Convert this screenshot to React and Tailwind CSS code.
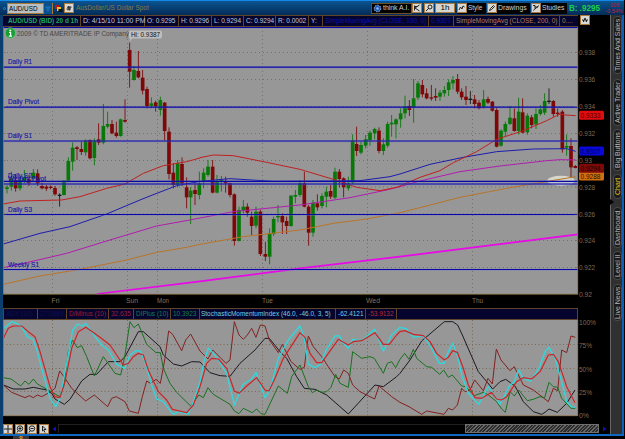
import React from "react";

// Chart data is kept on a 3x grid: trace(dx, dy, points) shifts one stretch of a study.
const trace = (dx, dy, pts) =>
  pts
    .split(" ")
    .map((p) => {
      const [x, y] = p.split(",").map(Number);
      return `${x + dx},${y + dy}`;
    })
    .join(" ");
const join = (...parts) => parts.map((p) => trace(...p)).join(" ");

const SMA_RED = join(
  [0, 300, "10,312 60,303 185,300 240,290 320,265 375,252 430,220 490,197 560,185 600,174"],
  [600, 300, "0,173 40,165 100,167 200,187 300,208 400,238 470,262 540,272 590,262"],
  [1200, 300, "0,258 60,232 120,212 160,188 230,155 290,118 370,92 440,62 480,42 495,45 527,47"]
);
const SMA_BLUE = join(
  [0, 600, "10,132 120,100 210,80 320,42 420,0"],
  [0, 300, "450,288 530,257"],
  [600, 300, "0,244 90,236 220,244 400,243 480,242 570,230"],
  [1200, 300, "0,222 90,193 190,172 290,155 400,147 500,146 527,154"]
);
const SMA_PURPLE = join(
  [0, 600, "10,203 80,188 200,160 330,120 470,78 570,60"],
  [600, 600, "0,54 100,35 300,15"],
  [600, 300, "450,293 560,270"],
  [1200, 300, "0,260 60,243 180,215 300,198 440,182 480,179 527,180"]
);
const SMA_ORANGE = join(
  [0, 600, "10,253 120,228 240,208 380,180 470,157 560,142"],
  [600, 600, "0,133 130,110 300,90 400,70 500,57"],
  [1200, 600, "0,38"],
  [1200, 300, "40,328 180,292 320,265 450,243 527,230"]
);
const TREND = "290,882 600,844 900,805 1200,770 1734,703";

const SMI = join(
  [0, 915, "12,70 35,50 50,55 65,65 82,95 100,105 112,140 125,190 150,280 167,305 182,275 195,200 205,150 218,75 233,57 247,63 257,55 280,88 305,120 325,135 350,178 375,190 390,150 407,137 420,138 435,170 455,240 470,282 490,290 505,310 520,328 535,320 565,328 580,290"],
  [600, 915, "0,230 12,170 25,130 45,150 80,205 103,300 130,237 155,222 168,203 195,278 210,255 235,160 265,105 300,63 312,95 325,178 345,188 362,178 380,132 405,93 418,92 430,115 445,130 458,103 485,107 524,73 550,138 575,90"],
  [1200, 915, "0,67 20,72 40,97 70,92 95,130 118,175 132,175 145,140 158,115 172,150 185,210 205,265 236,298 265,245 285,275 300,298 330,240 342,232 356,195 370,220 393,228 418,188 435,140 447,127 465,160 485,230 500,290 515,305 525,307"]
);
const SIGNAL = join(
  [0, 915, "10,100 25,70 40,63 65,63 85,80 105,95 120,140 150,245 165,275 180,278 195,230 215,130 235,80 258,67 300,97 330,120 370,180 385,175 400,155 415,145 430,150 445,195 475,260 500,285 517,313 560,323 580,300"],
  [600, 915, "0,245 20,175 35,160 55,162 80,190 103,258 117,265 140,243 170,218 195,255 207,258 225,220 250,160 300,83 315,97 330,145 350,173 365,173 385,145 415,103 445,120 460,110 485,107 525,83 550,118 568,118 590,90"],
  [1200, 915, "0,80 15,77 40,88 70,92 90,110 110,145 133,165 145,157 158,137 172,142 190,190 205,240 225,278 245,280 275,262 290,282 305,285 320,275 350,230 370,218 395,222 420,200 445,150 460,148 475,170 500,245 525,293"]
);
const ADX = join(
  [0, 915, "10,240 40,252 75,252 100,247 140,255 155,265 165,282 193,298 210,283 245,228 270,208 290,208 325,170 360,170 375,155 415,80 430,80 480,125 490,150 520,177 545,183 575,170"],
  [600, 915, "0,171 30,203 60,212 90,214 120,175 165,135 195,100 208,100 240,140 260,160 290,215 313,250 345,253 380,270 445,327 525,240 550,245 590,215"],
  [1200, 915, "0,205 30,165 65,108 133,50 158,50 173,60 187,90 235,200 262,232 278,252 300,230 317,223 345,243 370,290 400,320 425,328 435,322 447,312 472,322 500,295 525,255"]
);
const DI_MINUS = join(
  [0, 915, "10,240 35,262 75,278 88,272 100,278 112,270 125,275 150,262 165,250 179,198 192,215 215,250 257,288 283,270 323,305 335,280 349,275 375,290 388,318 415,325 427,275 440,228 452,235 468,223 481,235 495,160 506,78 518,88 545,137 557,105 572,87 590,120"],
  [600, 915, "0,138 24,162 38,135 78,175 90,165 103,50 117,90 130,103 142,90 155,70 168,97 181,60 195,63 208,105 235,143 247,118 273,170 300,193 313,187 325,93 340,125 365,155 385,185 405,215 418,222 431,195 445,205 458,240 480,260 524,282 537,243 575,275"],
  [1200, 915, "0,292 27,305 65,328 80,318 132,328 145,310 158,315 172,300 185,250 195,260 210,255 224,225 250,257 264,220 277,237 289,132 303,165 330,197 343,185 370,240 400,255 445,290 460,250 473,257 485,135 500,143 513,93 526,97"]
);
const DI_PLUS = join(
  [0, 915, "10,218 33,222 62,243 75,228 87,238 100,222 112,237 150,258 179,275 192,240 205,140 217,105 232,128 245,122 260,155 283,213 310,155 345,205 362,210 375,150 390,50 402,68 415,57 440,118 468,143 481,143 490,190 510,235 530,262 572,303 597,270"],
  [600, 915, "10,278 24,248 40,268 90,298 103,318 117,326 130,310 157,323 170,312 183,326 195,328 235,243 262,265 275,215 300,180 325,245 337,263 350,255 365,262 380,260 393,247 407,208 420,235 445,247 458,140 485,160 510,155 523,160 550,205 562,175 575,170 587,188"],
  [1200, 915, "0,163 14,145 27,163 40,133 50,160 80,185 95,187 119,208 131,195 145,217 157,210 185,243 197,245 223,272 250,262 265,270 290,290 305,312 316,322 330,260 343,273 356,255 382,287 400,283 420,275 434,278 447,232 460,245 473,247 485,280 513,310 526,310"]
);

// [x, body top, body bottom, high, low, colour] on the same 3x grid
const CANDLES = [
  [21, 562, 567, 555, 580, "g"], [34, 535, 560, 515, 572, "g"], [47, 540, 565, 522, 575, "r"],
  [60, 540, 565, 528, 572, "g"], [73, 532, 543, 510, 550, "g"], [87, 538, 548, 525, 558, "r"],
  [100, 518, 535, 507, 545, "g"], [113, 520, 550, 508, 558, "r"], [126, 558, 565, 548, 568, "r"],
  [139, 560, 566, 555, 573, "r"], [152, 560, 564, 556, 568, "r"], [165, 564, 583, 558, 587, "r"],
  [179, 584, 588, 580, 620, "k"], [192, 542, 585, 540, 586, "g"], [205, 483, 542, 472, 545, "g"],
  [218, 443, 485, 427, 512, "g"], [231, 442, 447, 438, 480, "r"], [244, 447, 456, 425, 465, "r"],
  [257, 422, 457, 418, 467, "g"], [270, 420, 475, 418, 478, "r"], [283, 422, 474, 415, 496, "g"],
  [296, 418, 428, 370, 435, "r"], [310, 378, 428, 312, 433, "g"], [323, 372, 380, 335, 385, "g"],
  [336, 372, 400, 360, 403, "r"], [349, 398, 408, 365, 413, "r"], [362, 358, 408, 356, 410, "g"],
  [375, 360, 365, 298, 368, "r"], [389, 150, 215, 128, 263, "r"], [402, 210, 240, 198, 242, "g"],
  [415, 213, 232, 153, 235, "r"], [428, 233, 272, 210, 283, "r"], [441, 267, 318, 260, 325, "r"],
  [454, 310, 318, 292, 325, "g"], [467, 307, 319, 302, 335, "r"], [481, 300, 330, 290, 347, "g"],
  [494, 308, 393, 306, 422, "r"], [507, 395, 522, 382, 538, "r"], [520, 518, 555, 490, 565, "r"],
  [533, 490, 555, 480, 562, "g"], [546, 492, 550, 472, 558, "r"], [560, 562, 592, 532, 625, "r"],
  [572, 572, 592, 562, 672, "g"], [585, 570, 582, 545, 615, "r"], [598, 550, 585, 515, 598, "g"],
  [611, 518, 543, 505, 565, "g"], [624, 500, 525, 480, 530, "g"], [638, 500, 578, 480, 580, "r"],
  [651, 543, 578, 525, 580, "g"], [664, 540, 545, 528, 575, "g"], [677, 543, 550, 530, 578, "r"],
  [690, 550, 585, 548, 592, "r"], [703, 583, 723, 580, 737, "r"], [717, 630, 723, 620, 724, "g"],
  [730, 620, 632, 600, 640, "g"], [742, 620, 638, 610, 650, "r"], [755, 650, 678, 635, 705, "r"],
  [768, 635, 677, 620, 685, "g"], [781, 635, 762, 628, 768, "r"], [796, 762, 770, 725, 783, "r"],
  [809, 700, 770, 685, 793, "g"], [821, 657, 702, 650, 708, "g"], [834, 648, 652, 615, 667, "g"],
  [847, 648, 667, 640, 702, "r"], [860, 663, 678, 650, 702, "r"], [873, 587, 678, 585, 680, "g"],
  [886, 585, 590, 570, 610, "g"], [900, 550, 585, 540, 590, "g"], [913, 550, 620, 515, 622, "r"],
  [926, 620, 698, 615, 737, "r"], [939, 608, 698, 600, 710, "g"], [952, 610, 622, 583, 632, "r"],
  [966, 588, 618, 580, 625, "g"], [979, 575, 590, 560, 622, "g"], [992, 573, 590, 555, 597, "r"],
  [1005, 515, 593, 503, 597, "g"], [1018, 515, 537, 507, 562, "r"], [1031, 535, 562, 532, 592, "r"],
  [1045, 550, 565, 530, 572, "g"], [1058, 422, 547, 403, 552, "g"], [1070, 432, 453, 380, 468, "r"],
  [1083, 435, 458, 425, 463, "g"], [1097, 418, 437, 405, 445, "g"], [1110, 398, 420, 392, 437, "g"],
  [1124, 387, 400, 383, 418, "g"], [1137, 392, 453, 382, 460, "r"], [1150, 433, 453, 415, 465, "g"],
  [1163, 372, 437, 365, 443, "g"], [1175, 368, 373, 345, 410, "g"], [1188, 358, 373, 355, 415, "g"],
  [1202, 340, 358, 325, 383, "g"], [1215, 320, 340, 287, 355, "g"], [1228, 318, 330, 300, 348, "r"],
  [1241, 295, 322, 237, 368, "g"], [1254, 250, 293, 243, 300, "g"], [1267, 255, 283, 240, 292, "r"],
  [1280, 280, 295, 265, 298, "r"], [1294, 292, 296, 255, 302, "r"], [1307, 288, 293, 265, 303, "r"],
  [1320, 278, 290, 270, 302, "g"], [1333, 270, 280, 258, 290, "g"], [1346, 247, 270, 238, 288, "g"],
  [1359, 240, 250, 228, 268, "g"], [1373, 237, 275, 222, 282, "r"], [1385, 275, 292, 265, 300, "r"],
  [1398, 290, 300, 258, 315, "r"], [1411, 296, 300, 273, 312, "k"], [1424, 298, 312, 285, 325, "r"],
  [1437, 308, 325, 300, 328, "r"], [1451, 298, 322, 270, 326, "g"], [1464, 297, 308, 290, 312, "r"],
  [1477, 305, 332, 303, 335, "r"], [1490, 330, 440, 322, 442, "r"], [1503, 392, 437, 388, 440, "g"],
  [1516, 372, 395, 365, 410, "g"], [1530, 353, 372, 318, 375, "g"], [1543, 355, 393, 325, 395, "r"],
  [1556, 335, 393, 293, 403, "g"], [1568, 337, 398, 295, 400, "r"], [1582, 347, 397, 340, 404, "g"],
  [1595, 352, 375, 345, 385, "r"], [1608, 342, 373, 325, 387, "g"], [1621, 328, 342, 315, 347, "g"],
  [1634, 303, 338, 280, 345, "g"], [1647, 302, 306, 265, 312, "k"], [1660, 303, 342, 300, 350, "r"],
  [1673, 338, 342, 325, 350, "r"], [1687, 335, 448, 330, 458, "r"], [1700, 438, 443, 403, 467, "g"],
  [1713, 438, 502, 415, 540, "r"], [1726, 498, 504, 495, 505, "r"],
];
const INK = { g: "#087808", r: "#7e0808", k: "#181818" };

const V_GRID = [52.5, 127.5, 157.5, 262.5, 367.5, 472.5];
const PRICES = [
  [52.5, "0.938"], [79.5, "0.936"], [106.5, "0.934"], [133.5, "0.932"], [160.5, "0.93"],
  [187, "0.928"], [214, "0.926"], [240.5, "0.924"], [267.5, "0.922"], [294, "0.92"],
];
const PIVOTS = [27.5, 67.2, 107.2, 141, 181.3, 184, 214.5, 269.5];
const PIVOT_LABELS = [
  ["Daily R1", 64, 24], ["Daily Pivot", 104, 31], ["Daily S1", 138, 24], ["Daily S2", 178, 24],
  ["Weekly Pivot", 181, 38], ["Daily S3", 212, 24], ["Weekly S1", 266.5, 31],
];
const DAYS = [["Fri", 51.5, 8], ["Sun", 126, 12], ["Mon", 157, 12], ["Tue", 262, 11], ["Wed", 366, 14], ["Thu", 472, 11]];
const TAGS = [
  [115.3, "0.9333", "#e00c10", "#500000"], [151, "0.9307", "#0808d8", "#000050"],
  [176, "0.9288", "#d07010", "#2a1000"], [168.2, "0.9294", "#7e0a08", "#200000"],
];

function Plot({ points, color, width = 3 }) {
  return <polyline points={points} fill="none" stroke={color} strokeWidth={width} strokeLinejoin="round" />;
}

function PriceChart() {
  return (
    <svg className="block shrink-0" width="607" height="281" viewBox="3 27 607 281">
      <rect x="3" y="27" width="575" height="267" fill="#979797" />
      <g stroke="#67655e" strokeWidth="1" strokeDasharray="1 3" opacity="0.75">
        {PRICES.slice(0, 9).map(([y]) => <path key={y} d={`M3 ${y}H578`} />)}
        {V_GRID.map((x) => <path key={x} d={`M${x} 27V294`} />)}
      </g>
      <g transform="scale(0.33333)">
        {CANDLES.map(([x, top, bottom, high, low, c]) => (
          <g key={x} fill={INK[c]}>
            <rect x={x - 1.3} y={high} width="2.6" height={low - high} />
            <rect x={x - 5.5} y={top} width="11" height={bottom - top} />
          </g>
        ))}
        <ellipse cx="1683" cy="542" rx="41" ry="15" fill="#e6e6d8" opacity="0.8" />
        <Plot points={SMA_ORANGE} color="#b87428" />
        <Plot points={SMA_PURPLE} color="#b01cb0" />
        <Plot points={SMA_BLUE} color="#1c1cae" />
        <Plot points={SMA_RED} color="#c02020" />
        <Plot points={TREND} color="#e808e8" width={5} />
      </g>
      {PIVOTS.map((y) => (
        <g key={y}>
          <path d={`M3 ${y + 0.3}H578`} stroke="#7878d8" strokeWidth="2" opacity="0.4" />
          <path d={`M3 ${y}H578`} stroke="#0808a4" strokeWidth="1.2" />
        </g>
      ))}
      <g fontFamily="'Liberation Sans', Arial, sans-serif" fontSize="8">
        {PIVOT_LABELS.map(([t, y, w]) => (
          <text key={t} x="8" y={y} textLength={w} lengthAdjust="spacingAndGlyphs" fill="#1414a8" stroke="#1414a8" strokeWidth="0.15">{t}</text>
        ))}
        <text x="17" y="36" fontSize="7.5" textLength="112" lengthAdjust="spacingAndGlyphs" fill="#484848">2009 © TD AMERITRADE IP Company</text>
        <path d="M130 30.5h30q2 0 2 2v4q0 2-2 2h-28l-2 3 0-3q-1 0-1-2v-4q0-2 1-2z" fill="#bebebe" />
        <text x="131" y="37.2" textLength="29" lengthAdjust="spacingAndGlyphs" fill="#111">Hi: 0.9387</text>
        <circle cx="10.3" cy="33" r="5.2" fill="#17a034" stroke="#6cc47c" strokeWidth="0.8" />
        <circle cx="10.3" cy="30.5" r="1" fill="#fff" />
        <path d="M9 32.5h1.6v3.6M8.8 36.2h3.2" stroke="#fff" strokeWidth="1.2" fill="none" />
        {PRICES.map(([y, t]) => (
          <g key={t}>
            <path d={`M575 ${y}h3M3 ${y}h3`} stroke="#8a6a48" strokeWidth="0.7" />
            <text x="579" y={y + 2.9} textLength={t.length === 5 ? 16 : 13} lengthAdjust="spacingAndGlyphs" fill="#84694f">{t}</text>
          </g>
        ))}
        {TAGS.map(([y, t, bg, fg]) => (
          <g key={t}>
            <rect x="579" y={y - 4.5} width="25" height="9" rx="1.5" fill={bg} />
            <text x="580.5" y={y + 2.8} textLength="20" lengthAdjust="spacingAndGlyphs" fill={fg}>{t}</text>
          </g>
        ))}
        {DAYS.map(([t, x, w]) => (
          <text key={t} x={x} y="302.7" textLength={w} lengthAdjust="spacingAndGlyphs" fill="#8a7058">{t}</text>
        ))}
      </g>
      <path d="M3.5 27V294.3H577.7V27" fill="none" stroke="#8c7048" strokeWidth="0.8" />
    </svg>
  );
}

function Oscillator() {
  return (
    <svg className="block shrink-0" width="607" height="103" viewBox="3 320 607 103">
      <rect x="3" y="320" width="575" height="96" fill="#979797" />
      <g stroke="#756044" strokeDasharray="1 2.5" opacity="0.85">
        {[344.5, 368.5, 391.5].map((y) => <path key={y} d={`M3 ${y}H578`} />)}
        {V_GRID.map((x) => <path key={x} d={`M${x} 320V416`} />)}
      </g>
      <g transform="scale(0.33333)">
        <Plot points={ADX} color="#1c1820" />
        <Plot points={DI_MINUS} color="#842020" />
        <Plot points={DI_PLUS} color="#187020" />
        <Plot points={SMI} color="#30d8dc" width={4} />
        <Plot points={SIGNAL} color="#cc2428" width={3.6} />
      </g>
      <path d="M3.5 320V415.7H577.7V320" fill="none" stroke="#8c7048" strokeWidth="0.8" />
      <g fontFamily="'Liberation Sans', Arial, sans-serif" fontSize="8" fill="#84694f">
        {[[321.5, "100%", 17], [344.5, "75%", 13], [368.5, "50%", 13], [391.5, "25%", 13], [415, "0%", 10]].map(([y, t, w]) => (
          <text key={t} x="579" y={y + 3} textLength={w} lengthAdjust="spacingAndGlyphs">{t}</text>
        ))}
      </g>
    </svg>
  );
}

function Narrow({ scale = "scale-x-[0.81]", children }) {
  return <span className={`inline-block origin-left whitespace-nowrap ${scale}`}>{children}</span>;
}

function Cell({ w, color, pad = "pl-[2px]", scale, children }) {
  return (
    <div className={`shrink-0 border-r border-[#5e4428] ${pad} ${w} ${color}`}>
      <Narrow scale={scale}>{children}</Narrow>
    </div>
  );
}

function Square({ children }) {
  return (
    <svg className="block shrink-0 border border-[#a8783c] bg-[#d8d8d4]" width="10" height="10" viewBox="0 0 8 8" fill="none" stroke="#222" strokeWidth="1">
      {children}
    </svg>
  );
}

function TitleBar() {
  return (
    <div className="flex h-[15px] w-[624px] items-center border-t border-[#1688e8] bg-linear-to-b from-[#0a5490] to-[#052c58] pl-[3px] text-[8px] leading-[10px]">
      <span className="size-[3px] shrink-0 rounded-full border border-[#3488b8]" />
      <div className="ml-[1px] h-[11px] w-[37px] shrink-0 border border-[#a87838] bg-[#b8c0c4] pl-px leading-[9px] text-black">
        <Narrow scale="scale-x-[0.79]">AUD/USD</Narrow>
      </div>
      <svg width="9" height="11" viewBox="0 0 9 11" className="shrink-0 border-r border-[#a87838] bg-[#09508c]"><path d="M1.5 4h6M2.5 6h4M3.5 8h2" stroke="#1888d8" /></svg>
      <svg className="ml-[1px] shrink-0" width="9" height="9" viewBox="0 0 9 9"><path d="M1 1h4v4H1z" fill="#c01414" /><path d="M3 3h4v4H3z" fill="#e8c820" /><path d="M4.5 5h4v3h-4z" fill="#111" /></svg>
      <div className="ml-[1px]"><Square><path d="M2 3.2h4.5M1.5 5h4.5M3.5 2 3 6.5M5 2l-.5 4.5" strokeWidth=".9" /></Square></div>
      <div className="ml-[2px] w-[74px] shrink-0 text-[#8b7a46]"><Narrow>AusDollar/US Dollar Spot</Narrow></div>
      <div className="ml-auto flex h-[11px] w-[41px] shrink-0 items-center gap-[1px] border border-[#68502c] bg-black pl-px text-[#d0d0d0]">
        <svg className="shrink-0" width="9" height="9" viewBox="0 0 9 9"><circle cx="4.5" cy="4.5" r="3.3" fill="#1e58b8" stroke="#a8c0e0" strokeDasharray="1.5 1" /><circle cx="4.5" cy="4.5" r="1.3" fill="#88b8f0" /></svg>
        <Narrow scale="scale-x-[0.86]">think A.I.</Narrow>
      </div>
      <div className="flex shrink-0 gap-[2px]">
        <Square><path d="M1.5 1.5v5M6.5 1 2 4l4.5 3M1 2.5h3" /></Square>
        <Square><path d="m1 7 3-3" /><circle cx="5" cy="3" r="2" /></Square>
      </div>
      <div className="ml-[1px] h-[10px] w-[20px] shrink-0 border border-[#a8783c] bg-[#d4d4d0] text-center leading-[8px] text-black">1h</div>
      <div className="ml-[2px] flex h-[11px] w-[29px] shrink-0 items-center gap-[1px] bg-black text-[#d0d0d0]">
        <Square><path d="M1 6l1.5-3 1.5 2 1-3 1.5 1" /></Square><Narrow>Style</Narrow>
      </div>
      <div className="ml-[1px] flex h-[11px] w-[43px] shrink-0 items-center gap-[1px] bg-black text-[#d0d0d0]">
        <Square><path d="m1.5 6.5 1-2 3-3 1 1-3 3z" /></Square><Narrow scale="scale-x-[0.86]">Drawings</Narrow>
      </div>
      <div className="ml-[1px] flex h-[11px] w-[36px] shrink-0 items-center gap-[1px] bg-black text-[#d0d0d0]">
        <Square><path d="M1 1.5h2v3l-1.5 2M3 5l4-3.5M3 3h3" /></Square><Narrow scale="scale-x-[0.84]">Studies</Narrow>
      </div>
      <div className="ml-[1px] w-[36px] shrink-0 pl-px text-[9px] font-bold text-[#18d048]"><Narrow scale="scale-x-[0.9]">B: .9295</Narrow></div>
      <div className="w-[20px] shrink-0 text-center text-[5.5px] leading-[6px] text-[#c01c38]">.005<br />-0.54%</div>
    </div>
  );
}

const TABS = [
  ["Times And Sales", "h-[58px]", "text-[#b8b8b8]", "mt-[1px]"],
  ["Active Trader", "h-[47px]", "text-[#b8b8b8]", "mt-[5px]"],
  ["Big Buttons", "h-[42px]", "text-[#b8b8b8]", "mt-[3px]"],
  ["Chart", "h-[25px]", "text-[#e0c820]", "mt-[3px]"],
  ["Dashboard", "h-[41px]", "text-[#b8b8b8]", "mt-[8px]"],
  ["Level II", "h-[29px]", "text-[#b8b8b8]", "mt-[3px]"],
  ["Live News", "h-[37px]", "text-[#b8b8b8]", "mt-[4px]"],
];

function Sidebar() {
  return (
    <div className="relative w-[12px] shrink-0 border-l border-[#666] bg-[#303030]">
      {TABS.map(([t, h, c, m]) => (
        <div key={t} className={`ml-[2px] flex w-[9px] rotate-180 items-center justify-center whitespace-nowrap rounded-[4px] border border-[#4c4c4c] bg-[#1b1b1b] text-[7px] leading-[8px] [writing-mode:vertical-rl] ${h} ${c} ${m}`}>{t}</div>
      ))}
      <svg className="absolute -left-px top-[184px]" width="5" height="6" viewBox="0 0 5 6"><path d="M0 0v6l4-3z" fill="#000" /></svg>
    </div>
  );
}

export default function App() {
  return (
    <div className="h-[439px] w-[625px] overflow-hidden bg-black font-['Liberation_Sans',Arial,sans-serif]">
      <TitleBar />
      <div className="flex h-[419px] w-[624px] border-l-3 border-r-2 border-l-[#0b3f70] border-r-[#0c60b8]">
        <div className="w-[607px] shrink-0">
          <div className="flex h-[12px]">
            <div className="flex h-[12px] w-[575px] shrink-0 border-y border-[#5e4428] bg-[#04042e] text-[8px] leading-[10px] text-[#c4c4d0]">
              <Cell w="w-[78px]" pad="pl-[5px]" color="font-bold text-[#20a860]" scale="scale-x-[0.8]">AUD/USD (BID) 20 d 1h</Cell>
              <Cell w="w-[64px]" scale="scale-x-[0.86]">D: 4/15/10 11:00 PM</Cell>
              <Cell w="w-[34px]">O: 0.9295</Cell>
              <Cell w="w-[33px]">H: 0.9296</Cell>
              <Cell w="w-[32px]">L: 0.9294</Cell>
              <Cell w="w-[32px]">C: 0.9294</Cell>
              <Cell w="w-[33px]">R: 0.0002</Cell>
              <Cell w="w-[14px]">Y:</Cell>
              <Cell w="w-[106px]" color="text-[#1212a8]">SimpleMovingAvg (CLOSE, 100, 0)</Cell>
              <Cell w="w-[25px]" color="text-[#1212a8]">0.9307</Cell>
              <Cell w="w-[106px]" color="text-[#b87c58]">SimpleMovingAvg (CLOSE, 200, 0)</Cell>
              <div className="pl-[2px] text-[#b87c58]"><Narrow>0....</Narrow></div>
            </div>
            <div className="ml-[2px]"><Square><path d="M1 4h1.5V6L4 2l1.5 4V4H7" /></Square></div>
          </div>
          <PriceChart />
          <div className="flex h-[12px] w-[575px] border border-[#5e4428] bg-[#04042e] text-[8px] leading-[10px]">
            <Cell w="w-[34px]" color="text-[#101050]">ADX (10)</Cell>
            <Cell w="w-[29px]" color="text-[#101050]">27.0869</Cell>
            <Cell w="w-[42px]" color="text-[#a01c38]">DIMinus (10)</Cell>
            <Cell w="w-[25px]" color="text-[#a01c38]">32.635</Cell>
            <Cell w="w-[37px]" color="text-[#148048]">DIPlus (10)</Cell>
            <Cell w="w-[29px]" color="text-[#148048]">10.3923</Cell>
            <Cell w="w-[136px]" pad="pl-px" color="text-[#70d0e8]">StochasticMomentumIndex (46.0, -46.0, 3, 5)</Cell>
            <Cell w="w-[30px]" color="text-[#70d0e8]">-62.4121</Cell>
            <Cell w="w-[31px]" color="text-[#c02434]">-53.9132</Cell>
          </div>
          <Oscillator />
          <div className="flex h-[11px] items-center">
            <div className="flex w-[45px] gap-[2px]">
              <Square><path d="M4 0v8M0 4h8" /></Square>
              <Square><circle cx="4" cy="3.5" r="2.7" /><path d="M2.5 3.5h3M4 2v3M2 6 1 7.5" /></Square>
              <Square><circle cx="4" cy="3.5" r="2.7" /><path d="M2.5 3.5h3M2 6 1 7.5" /></Square>
              <Square><path d="M2.5 1v5l1.2-1L5 7.5M2.5 1l3.5 3.5H4" /></Square>
            </div>
            <svg className="ml-[3px]" width="7" height="8" viewBox="0 0 7 8"><path d="M5 1.5v5L1.5 4z" fill="#1010b8" /></svg>
            <div className="h-[9px] flex-1 border-l border-t border-[#202020]" />
            <div className="h-[9px] w-[134px] border border-[#707070] bg-[repeating-linear-gradient(135deg,#686868_0_1px,#2c2c2c_1px_2.5px)]" />
            <svg className="ml-[3px] mr-[2px]" width="6" height="8" viewBox="0 0 6 8"><path d="M1 1.5v5L4.5 4z" fill="#1010b8" /></svg>
          </div>
        </div>
        <Sidebar />
      </div>
      <div className="h-[2px] w-[624px] bg-[#0c68c0]" />
      <div className="ml-[13px] h-[3px] w-[16px] overflow-hidden bg-[#383838] text-center text-[7px] font-bold leading-[5px] text-[#c89a20]">8</div>
    </div>
  );
}
